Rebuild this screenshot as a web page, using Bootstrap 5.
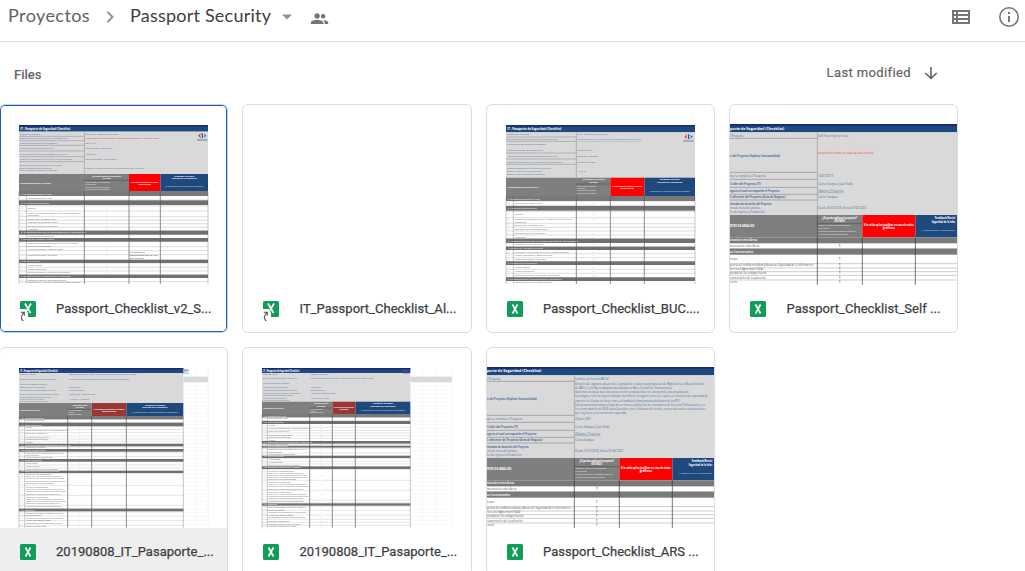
<!DOCTYPE html>
<html lang="es">
<head>
<meta charset="utf-8">
<meta name="viewport" content="width=device-width, initial-scale=1">
<title>Passport Security</title>
<link href="https://cdn.jsdelivr.net/npm/bootstrap@5.3.0/dist/css/bootstrap.min.css" rel="stylesheet">
<style>
body{font-family:Roboto,"Liberation Sans",sans-serif;color:#3c4043;overflow:hidden;height:571px;background:#fff}
.topbar{height:42px;border-bottom:1px solid #dadce0;padding:0 5px 8px 8px}
.crumb{font-family:Lato,Roboto,sans-serif;font-size:18px;line-height:24px;white-space:nowrap;margin-top:-3px}
.crumb-parent{color:#5f6368;letter-spacing:.42px;width:82px}
.crumb-current{color:#3c4043;letter-spacing:.22px;width:142px;margin-left:15px}
.subbar{height:62px;padding:0 87px 0 14px;font-size:13px;font-weight:500;color:#5f6368}
.sorter{font-weight:400;letter-spacing:.38px;-webkit-text-stroke:.2px #5f6368}
.files{display:grid;grid-template-columns:repeat(4,229.5px);grid-auto-rows:229px;gap:14px;margin-left:-1.5px}
.file{border:1px solid #dadce0;border-radius:6px;overflow:hidden;background:#fff}
.file:nth-child(4){width:229px}
.file.selected{box-shadow:inset 0 0 0 1px #185abc;border-color:#c6d4ea}
.file.hovered .foot{background:#eee}
.thumb{display:block;width:228px;height:180px;flex:none}
.foot{height:48px;padding-left:20px;flex:none}
.foot svg{width:18px;height:24px;flex:none}
.fname{font-size:13px;font-weight:400;-webkit-text-stroke:.25px #3c4043;letter-spacing:.03px;margin-left:18.500px;white-space:nowrap;line-height:20px}
</style>
</head>
<body>
<header class="topbar d-flex align-items-center">
  <span class="crumb crumb-parent">Proyectos</span>
  <svg class="ms-3" width="9" height="14" viewBox="0 0 9 14"><path d="M1.500 2l5 5-5 5" fill="none" stroke="#8f9397" stroke-width="2"/></svg>
  <span class="crumb crumb-current">Passport Security</span>
  <svg style="margin-left:10px" width="10" height="6" viewBox="0 0 10 6"><path d="M0 .5h10l-5 5z" fill="#8f9397"/></svg>
  <svg style="margin:4px 0 0 18px" width="19" height="19" viewBox="0 0 24 24" fill="#757575"><path d="M16.500 12a2.900 2.900 0 1 0 0-5.800 2.900 2.900 0 0 0 0 5.800zM9 12a3.300 3.300 0 1 0 0-6.600A3.300 3.300 0 0 0 9 12zm7.500 2c1.500 1 2 2 2 3.500v1.500h4.500v-1.700c0-2.100-4-3.300-6.500-3.300zM9 13.600c-2.700 0-8 1.300-8 3.900V19h16v-1.500c0-2.600-5.300-3.900-8-3.900z"/></svg>
  <svg class="ms-auto" width="18" height="14" viewBox="0 0 18 14" fill="#757575"><path fill-rule="evenodd" d="M0 0h18v14H0zM2 2v2h2V2zm4 0v2h10V2zM2 6v2h2V6zm4 0v2h10V6zM2 10v2h2v-2zm4 0v2h10v-2z"/></svg>
  <svg style="margin-left:28px" width="22" height="22" viewBox="0 0 22 22"><circle cx="11" cy="11" r="9.200" fill="none" stroke="#757575" stroke-width="1.600"/><path d="M10 6h2v2h-2zM10 10h2v6h-2z" fill="#757575"/></svg>
</header>
<main>
  <div class="subbar d-flex align-items-center justify-content-between">
    <span class="pt-1">Files</span>
    <span class="sorter d-flex align-items-center">Last modified
      <svg style="margin-left:13px" width="14" height="14" viewBox="0 0 14 14"><path d="M7 1v11.500M1.300 7L7 12.500 12.700 7" fill="none" stroke="#5f6368" stroke-width="1.600"/></svg>
    </span>
  </div>
  <div class="files" id="files"></div>
</main>
<script src="https://cdn.jsdelivr.net/npm/bootstrap@5.3.0/dist/js/bootstrap.bundle.min.js"></script>
<script>
const NAVY='#1f497d', GREY='#d9d9d9', BAND='#7a7a7a', INK='#4f6d99';
const rect=(x,y,x2,y2,f)=>`<rect x="${x}" y="${y}" width="${x2-x}" height="${y2-y}" fill="${f}"/>`;
const line=(x,y,x2,y2,s='#777',w=1.5)=>`<path d="M${x} ${y}L${x2} ${y2}" stroke="${s}" stroke-width="${w}"/>`;
// text whose width is fitted to w sheet units
const txt=(x,y,w,t,f=INK,s=8,b=400,a='start')=>`<text x="${x}" y="${y}" font-size="${s}" font-weight="${b}" fill="${f}" text-anchor="${a}" textLength="${w}" lengthAdjust="spacingAndGlyphs">${t}</text>`;
const mid=(x,y,w,t,f='#fff',s=7)=>txt(x,y,w,t,f,s,700,'middle');
const logo=(x,y,k=1)=>`<g transform="translate(${x} ${y}) scale(${k})"><path d="M9 0L0 8l9 8-3-8z" fill="#e33"/><path d="M11 0q7 2 3 8 4 6-3 8zM18 2l7 6-7 6 2-6z" fill="#2257a5"/><path d="M-3 21h31" stroke="#2257a5" stroke-width="2"/></g>`;

// Sheet whose full width is visible
function fullSheet(o){
  const [a,b,c,d,e,f]=o.v, [t0,t1,t2,t3]=o.y; let s='';
  s+=rect(a,t0,f,t1,NAVY)+rect(a,t0,f,t0+4,'#17257b')+rect(a,t1,f,t2,GREY);
  s+=txt(a+4,t1-6+(o.small?2:0),o.tw,'IT - Pasaporte de Seguridad (Checklist)','#fff',o.small?8:10,700);
  if(o.small){
    s+=rect(f,t1+11,o.r,t1+28,GREY);
    for(let y=t1+28;y<548;y+=11.5)s+=line(f,y,o.r,y,'#ececec',1);
    for(const x of [f+37,f+75,o.r])s+=line(x,t0,x,548,'#f1f1f1',1);
  } else s+=line(c,t1,c,t2,'#888');
  o.info.forEach(r=>{s+=txt(a+2,r[0],r[1],r[2],r[6]||INK,o.small?6:7,500);
    if(!o.small&&r[7])s+=line(a,r[0]+5,c,r[0]+5,'#888',1.5);
    if(r[3])s+=txt(c+3,r[0],r[3],r[4],r[5]||INK,o.small?6:7);});
  s+=rect(a,t2,d,t3,'#7f7f7f')+rect(d,t2,e,t3,o.small?'#993735':'#f00')+rect(e,t2,f,t3,NAVY);
  const m=(t2+t3)/2, dc=(c+d)/2,de=(d+e)/2,ef=(e+f)/2;
  s+=txt(a+4,m+3,o.small?60:92,'COMPONENTES DE ANÁLISIS','#fff',7,700);
  s+=mid(dc,t2+8,(d-c)*.65,'¿El punto aplica al proyecto?')+mid(dc,t2+15,25,'(SI/NO)')+line(c,t2+19,d,t2+19,'#444');
  ['Indicar el valor que corresponda','SI (Se aplica)','No aplica para el cambio','NA aplica pero ya implementado'].slice(0,o.small?3:4).forEach((t,i)=>s+=txt(c+2,t2+(o.small?24:27)+i*(o.small?5.500:7),(d-c)*(i==1?.25:.55),t,'#eee',o.small?5:6));
  s+=mid(de,m,(e-d)*.88,'Si la celda aplica justificar en caso de')+mid(de,m+7,(e-d)*.4,'malos gráficos');
  s+=mid(ef,t2+8,60,'Feedback Revisión')+mid(ef,t2+16,75,'Seguridad de la Información')+txt(ef,t3-(o.small?9:11),(f-e)*.8,'(A completar por el Área de Seguridad de la Información)','#dce6f1',6,400,'middle');
  o.rows.forEach(y=>s+=line(a,y,f,y,'#b0b0b0',o.small?1:1.3));
  o.items.forEach(r=>{s+=txt(a+4,r[0],9,r[4]||'1.1','#777',6)+txt(b+3,r[0],r[1],r[2],'#666',o.small?6:7);
    if(r[3]!==0)s+=txt((c+d)/2-2,r[0],4,'1','#666',6);});
  o.bands.forEach((r,i)=>s+=rect(a,r[0],f,r[1],i?'#707070':BAND)+txt(a+5,r[1]-(o.small?2:4),r[2],r[3],'#ddd',o.small?6:7,700));
  s+=[a,b,c,d,e,f].map(x=>line(x,t3,x,o.end,'#555',x==a||x==b||x==f?1:2)).join('');
  s+=logo(...o.logo);
  if(o.extra)s+=o.extra;
  return s;
}
// Sheet zoomed in so that its left and right edges are cropped
function cropSheet(top,dy){
  let s=rect(15,73,703,97,NAVY)+rect(15,72,703,77,'#17257b')+rect(15,97,703,345,GREY)+line(277,97,277,345,'#888');
  s+=txt(15,90+dy,163,'porte de Seguridad (Checklist)','#fff',12,700);
  [[110,41,'l Proyecto'],[170,150,'n del Proyecto (Explicar funcionalidad)',1],[232,107,'que se completa el Pasaporte'],[254,93,'l Líder del Proyecto (IT)',1],[275,148,'egocio el cual corresponde el Proyecto',1],[294,167,'l referente del Proyecto (Área de Negocio)',1],[314,125,'timadas de duración del Proyecto',1],[326,92,'cha de inicio del análisis,'],[338,104,'ha de ingreso a Producción']].forEach(r=>s+=txt(15,r[0],r[1],r[2],INK,8,r[3]?700:400));
  [115,217,238,262,283,300].forEach(y=>s+=line(15,y,277,y,'#777',1.5));
  s+=top;
  [[232,46,dy?'28 Junio 2020':'16/07/2019'],[254,105,'Carlos Vazquez, Juan Pablo'],[275,76,'Oldemos, Proyectos'],[294,59,'Carlos Vazquez'],[326,144,'Desde 01/01/2020, Hasta 01/06/2020']].forEach(r=>s+=txt(279,r[0],r[1],r[2]));
  s+=line(279,278,355,278,INK,1);
  s+=rect(15,345,412,412,'#7f7f7f')+rect(412,345,571,412,'#f00')+rect(571,345,703,412,NAVY)+line(277,345,277,412,'#333')+line(277,371,411,371,'#444');
  s+=txt(15,382,73,'NTES DE ANÁLISIS','#fff',8,700)+mid(344,356,104,'¿El punto aplica al proyecto?','#fff',8)+mid(344,366,32,'(SI/NO)','#fff',8);
  [[379,95,'Indicar el valor que corresponda'],[388,34,'SI (Se aplica)'],[396,111,'No aplica para el cambio Motivo'],[405,87,'NA aplica pero no implementado']].forEach(r=>s+=txt(280,r[0],r[1],r[2],'#eee',7));
  s+=mid(491,377,150,'Si la celda aplica justificar en caso de malos','#fff',8)+mid(491,386,36,'gráficos','#fff',8);
  s+=txt(629,356,62,'Feedback/Revisi','#fff',8,700)+txt(620,368,71,'Seguridad de la Infor','#fff',8,700)+txt(591,393,98,'(A completar por el Área de Segurid','#dce6f1',7);
  [446,491,504,515,526,540].forEach(y=>s+=line(15,y,703,y,'#888',1.3));
  s+=rect(15,412,703,430,BAND)+rect(15,446,703,464,BAND)+txt(15,424,82,'nicación entre Áreas','#eee',8,700)+txt(15,458,69,'os Contractuales','#eee',8,700);
  [[441,89,'municación entre Áreas'],[479,22,'trato'],[499,250,'gencia de confidencialidad y Anexo de Seguridad de la Información'],[510,99,'ice Level Agreement (SLA)'],[523,110,'piedad de los códigos fuente'],[536,107,'cumentación de la aplicación'],[549,22,'ración']].forEach(r=>s+=txt(15,r[0],r[1],r[2],'#555',8)+txt(342,r[0],4,'1','#444',8,700));
  s+=[277,412,571].map(x=>line(x,412,x,555,'#333',2)).join('');
  return s;
}
const L=['Nombre del Proyecto','Descripción del Proyecto (Explicar Funcionalidad)','Fecha en que se completa el Pasaporte','Nombre del Líder del Proyecto (IT)','Área de Negocio al cual corresponde el Proyecto','Nombre del referente del Proyecto (Área de Negocio)','Fechas estimadas de duración del Proyecto','Desde la fecha de inicio del análisis,','hasta la fecha de ingreso a Producción'];
const I=['Comunicación entre Áreas','Contrato','Cláusula de confidencialidad y Anexo de Seguridad de la','Información','Service Level Agreement (SLA)','Propiedad de los códigos fuente','Documentación de la aplicación','Auditoría','Clasificación de la información','Integración de la aplicación con AD/LDAP','Acceso a servidores y Bases de Datos','Acceso remoto','Acceso físico/lógico','Gestión de usuarios y perfiles en la plataforma'];
const B=['1. Comunicación entre Áreas','2. Aspectos Contractuales','3. Clasificación de la información y aplicación','4. Control de Accesos y Perfiles','5. Acceso de Proveedores','6. Componentes de Infraestructura y Tecnología','7. Desarrollo'];
const s1=fullSheet({v:[57,79,253,387,481,624],y:[75,95,222,273],end:552,tw:150,logo:[594,99],
 info:[[104,62,L[0],99,'Salesforce - Modulo Control Canal',0,0,1],[117,143,L[1],222,'Análisis sobre las herramientas y capacidades necesarias de Atención al Cliente','#f22',0,1],[131,112,L[2],31,'08/04/19',0,0,1],[148,102,L[3],80,'Carlos Vazquez, Juan Pablo',0,0,1],[165,143,L[4],31,'Marketing',0,0,1],[180,158,L[5],94,'Gonzalo Bouchan - Martin Lopez',0,0,1],[197,126,L[6]],[206,97,L[7],175,'Desde: 01/2018    Ingreso a Producción: 06/12/2018'],[214,112,L[8]]],
 rows:[300,318,333,350,361,371,382,392,404,425,440,452,464,489,502,513,524,545],
 items:[[297,74,I[0]],[328,25,I[1]],[341,160,I[2]],[348,35,I[3],0],[359,86,I[4]],[370,92,I[5]],[380,90,I[6]],[390,32,I[7]],[412,80,I[8]],[432,152,'Integración de la aplicación con AD/LDAP Perfiles de'],[440,70,'gestión de contraseñas',0],[451,107,I[10]],[469,90,'Claves encriptadas / Seguridad'],[498,43,I[11]],[509,57,I[12]],[519,127,I[13]],[542,115,'Compatibilidad de los componentes',0],[550,160,'Detallar con el Área de Plataformas, Bases de Datos',0]],
 bands:[[273,288,93,B[0]],[301,315,85,B[1]],[392,404,195,B[2]],[414,425,100,B[3]],[479,489,57,B[4]],[524,534,150,B[5]]],
 extra:txt(389,459,45,'Los accesos son','#555',7)+txt(389,469,84,'administrados con TSA por','#333',7)+txt(389,477,44,'aplicación','#555',7)});
const s3=fullSheet({v:[60,82,271,373,475,627],y:[75,97,233,288],end:552,tw:162,logo:[595,102],
 info:[[106,68,L[0],90,'BUC - Base Unica de Clientes',0,0,1],[119,153,L[1],192,'La nueva Base Unica de Clientes BUC será la base implementada en el Negocio',0,0,1],[136,119,L[2]],[154,109,L[3],46,'Carlos Vazquez',0,0,1],[172,151,L[4],60,'Oldemos, Proyectos',0,0,1],[188,168,L[5],56,'Marcelo Juan Lopez',0,0,1],[206,133,L[6]],[215,106,L[7],25,'1 Abril 20'],[224,115,L[8]]],
 rows:[303,316,335,353,371,382,393,405,416,440,461,473,484,508,520,532],
 items:[[312,82,I[0]],[345,27,I[1]],[359,173,I[2]],[368,36,I[3],0],[379,90,I[4],0],[390,98,I[5],0],[402,93,I[6]],[413,32,I[7]],[436,87,I[8]],[458,163,'Integración de la aplicación con AD/LDAP, Administradores de'],[469,114,I[10]],[480,94,'Acceso encriptado / Seguridad'],[503,47,I[11]],[516,59,I[12]],[528,136,I[13]],[550,112,'Compatibilidad de los componentes',0]],
 bands:[[288,303,96,B[0]],[318,332,87,B[1]],[416,429,212,B[2]],[440,450,105,B[3]],[484,495,88,B[4]],[532,543,162,B[5]]],
 extra:txt(274,127,186,'y el Módulo de Interfaces con los sistemas de la compañía, incluyendo Online','#7f95b2',7)});
const para=['Detalles de los componentes:','Detallar con el Área de Plataformas la arquitectura y','Compatibilidad con los componentes de Base de Datos','gestores sobre las versiones que están disponibles para el','servicio en Producción'];
function smallItems(k){const o=[];
 [229,248,258,267,278,286,293].forEach((y,i)=>o.push([y+k,[57,20,127,65,70,66,20][i],[I[0],I[1],I[2],I[4],I[5],I[6],I[7]][i]]));
 const ys=k?[301,316,323,329,345,354,362]:[310,326,333,340,357,366,374];
 [[60,I[8]],[115,I[9]],[40,'gestión de contraseñas',0],[80,I[10]],[35,I[11]],[42,I[12]],[95,I[13]]].forEach((r,i)=>o.push([ys[i],...r]));
 const p0=k?380:390;
 para.forEach((t,i)=>o.push([p0+i*6.500,[78,108,115,120,83][i],t,i==2?1:0]));
 (k?[414,443]:[429,458]).forEach(y=>para.slice(0,4).forEach((t,i)=>o.push([y+i*6.500,[68,115,120,105][i],t,i==1?1:0])));
 const tail=[[105,'Compatibilidad entre los distintos ambientes'],[112,'Detalles de los puntos de Procesos y Desarrollo'],[48,'según los accesos',0],[114,'Validación de los procesos con los referentes del'],[75,'Área de Seguridad',0],[110,'Documentación de los cambios según normas'],[62,'Parches de Seguridad']];
 const ty=k?[472,490,497,505,512,520,531]:[487,507,514,522,529,536,547];
 tail.forEach((r,i)=>o.push([ty[i],...r]));
 if(k)o.push([539,95,'Implementación de roles y perfiles'],[547,84,'Acceso a bases de datos']);
 return o;}
const s5=fullSheet({small:1,v:[57,74,203,275,379,550],r:624,y:[69,84,174,213],end:548,tw:112,logo:[550,71,.65],
 info:[[91,48,L[0],203,'Módulo de toma de datos - Portal de clientes según los lineamientos de atención unificados'],[106,108,L[1],183,'Implementar una nueva plataforma para la atención de Marketing con los datos CRM'],[120,82,L[2]],[130,77,L[3],35,'Carlos Vazquez'],[139,108,L[4],47,'Gerencia de Marketing'],[149,118,L[5],80,'Marcelo Lopez, Marketing Directo'],[158,94,L[6]],[165,75,L[7],62,'1 Mayo 2019 - Noviembre'],[172,83,L[8]]],
 rows:[223,233,254,263,273,282,289,306,322,335,350,360,369,386,421,451,481,491,501,513,527,541],
 items:smallItems(0),
 bands:[[213,223,70,B[0]],[233,244,63,B[1]],[296,304,150,B[2]],[312,320,75,B[3]],[342,350,63,B[4]],[377,384,115,B[5]],[491,499,40,B[6]]]});
const s6=fullSheet({small:1,v:[66,82,209,277,346,511],r:636,y:[69,84,170,207],end:548,tw:108,logo:[490,71,.65],
 info:[[90,45,L[0],52,'Banelco - Red Pagos',0],[103,103,L[1],188,'Desarrollo e integración del cobro con TC y débito para los servicios y pagos de clientes'],[117,80,L[2]],[128,75,L[3],30,'Carlos Vazquez'],[137,104,L[4],43,'Gerencia Comercial'],[146,113,L[5],75,'Fernando Marcelo Director'],[154,91,L[6]],[161,72,L[7],56,'1 Mayo 2019 - Junio'],[168,79,L[8]]],
 rows:[217,226,247,256,264,272,280,297,311,324,340,349,357,373,406,436,465,474,484,496,510,523,532,541],
 items:smallItems(-6),
 bands:[[207,217,66,B[0]],[228,237,60,B[1]],[288,296,145,B[2]],[302,308,72,B[3]],[332,339,60,B[4]],[364,372,110,B[5]],[475,482,40,B[6]]]});
const s4=cropSheet(txt(279,110,90,'Self Financing con roles')+txt(279,163,168,'Instalación sistema en cajas de auto servicio','#f33'),0);
const s7=cropSheet(txt(279,110,104,'Cambios de Versión ARS 4.1')+['A través del siguiente desarrollo el agrado de realizar una propuesta de Migración a la Nueva Versión','de ARS 4.1 y la Nueva Arquitectura basada en Base Central de Transacciones.','Queremos destacar que esta nueva versión y arquitectura, no solo permite una actualización','tecnológica, sino incorpora múltiples beneficios al negocio entre los cuales se encuentra la capacidad de','exponer las Ventas en Línea como así también la Implementación futura de un RTC.','Esta propuesta promueve luego de un intenso análisis de los consultores de Servicios Profesionales y es','la recomendación de NCR hacia Carrefour con el volumen de tiendas, puntos de venta o transacciones','que hoy tiene y al crecimiento esperado.'].map((t,i)=>txt(279,126+i*12.400,[387,292,340,398,317,390,392,156][i],t)).join(''),-2);

const files=[
 ['Passport_Checklist_v2_S...',s1,'0 15',1,'selected'],
 ['IT_Passport_Checklist_Al...','','0 0',1,''],
 ['Passport_Checklist_BUC....',s3,'3 15',0,''],
 ['Passport_Checklist_Self ...',s4,'15 15',0,''],
 ['20190808_IT_Pasaporte_...',s5,'0 9',0,'hovered'],
 ['20190808_IT_Pasaporte_...',s6,'9 9',0,''],
 ['Passport_Checklist_ARS ...',s7,'15 15',0,'']];
const icon='<svg viewBox="0 0 18 24"><rect y="4" width="16" height="16" rx="1.500" fill="#0f9d58"/><path d="M5.500 7.500l5 9M10.500 7.500l-5 9" stroke="#fff" stroke-width="1.700"/></svg>';
const shortcut='<svg viewBox="0 0 18 24"><path d="M1.500 4h13q1.500 0 1.500 1.500v13q0 1.500-1.500 1.500H8v-4l-2-4H0V5.500Q0 4 1.500 4z" fill="#0f9d58"/><path d="M5 6.500l5.500 9.500M11 6.500l-4 7" stroke="#fff" stroke-width="1.700"/><path d="M.7 15.200h3.600v3.600M4 15.500q-5 4.500-.500 9" fill="none" stroke="#555" stroke-width="1.100"/></svg>';
document.getElementById('files').innerHTML=files.map(([n,s,o,short,c])=>`<article class="file d-flex flex-column ${c}">
<svg class="thumb" viewBox="${o} 684 540" font-family="Open Sans, sans-serif">${s}</svg>
<div class="foot d-flex align-items-center">${short?shortcut:icon}<span class="fname">${n}</span></div></article>`).join('');
</script>
</body>
</html>
